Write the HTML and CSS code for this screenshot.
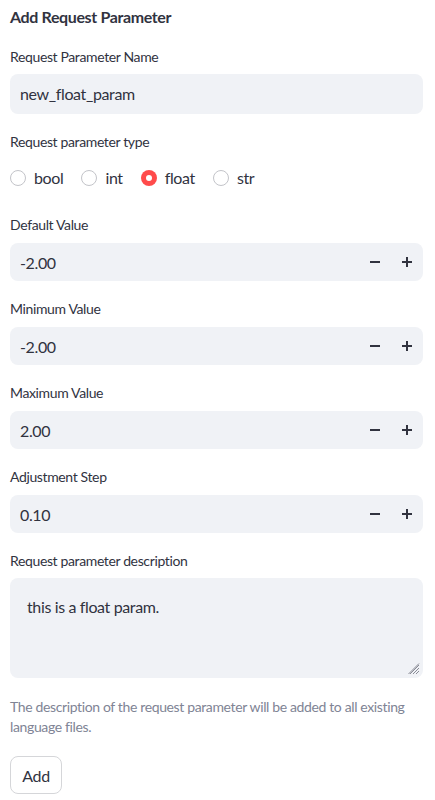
FILE: index.html
```html
<!DOCTYPE html>
<html lang="en">
<head>
<meta charset="utf-8">
<title>Add Request Parameter</title>
<link rel="stylesheet" href="styles.css">
</head>
<body>
<main class="form">
  <h3 class="title">Add Request Parameter</h3>

  <div class="field">
    <label class="label">Request Parameter Name</label>
    <div class="text-input">new_float_param</div>
  </div>

  <div class="field">
    <label class="label">Request parameter type</label>
    <div class="radios">
      <span class="radio"><span class="dot"></span>bool</span>
      <span class="radio"><span class="dot"></span>int</span>
      <span class="radio"><span class="dot on"></span>float</span>
      <span class="radio"><span class="dot"></span>str</span>
    </div>
  </div>

  <div class="field after-radios">
    <label class="label">Default Value</label>
    <div class="num-input">
      <span class="num-value">-2.00</span>
      <span class="step"><svg width="10" height="10" viewBox="0 0 10 10"><rect x="0" y="4" width="10" height="2" fill="#31333F"/></svg></span>
      <span class="step"><svg width="10" height="10" viewBox="0 0 10 10"><rect x="0" y="4" width="10" height="2" fill="#31333F"/><rect x="4" y="0" width="2" height="10" fill="#31333F"/></svg></span>
    </div>
  </div>

  <div class="field">
    <label class="label">Minimum Value</label>
    <div class="num-input">
      <span class="num-value">-2.00</span>
      <span class="step"><svg width="10" height="10" viewBox="0 0 10 10"><rect x="0" y="4" width="10" height="2" fill="#31333F"/></svg></span>
      <span class="step"><svg width="10" height="10" viewBox="0 0 10 10"><rect x="0" y="4" width="10" height="2" fill="#31333F"/><rect x="4" y="0" width="2" height="10" fill="#31333F"/></svg></span>
    </div>
  </div>

  <div class="field">
    <label class="label">Maximum Value</label>
    <div class="num-input">
      <span class="num-value">2.00</span>
      <span class="step"><svg width="10" height="10" viewBox="0 0 10 10"><rect x="0" y="4" width="10" height="2" fill="#31333F"/></svg></span>
      <span class="step"><svg width="10" height="10" viewBox="0 0 10 10"><rect x="0" y="4" width="10" height="2" fill="#31333F"/><rect x="4" y="0" width="2" height="10" fill="#31333F"/></svg></span>
    </div>
  </div>

  <div class="field">
    <label class="label">Adjustment Step</label>
    <div class="num-input">
      <span class="num-value">0.10</span>
      <span class="step"><svg width="10" height="10" viewBox="0 0 10 10"><rect x="0" y="4" width="10" height="2" fill="#31333F"/></svg></span>
      <span class="step"><svg width="10" height="10" viewBox="0 0 10 10"><rect x="0" y="4" width="10" height="2" fill="#31333F"/><rect x="4" y="0" width="2" height="10" fill="#31333F"/></svg></span>
    </div>
  </div>

  <div class="field">
    <label class="label">Request parameter description</label>
    <div class="textarea">this is a float param.
      <svg class="grip" width="12" height="12" viewBox="0 0 12 12"><path d="M11 2L2 11M11 5L5 11M11 8L8 11M11 0.5L0.5 11" stroke="#8a8c96" stroke-width="1" fill="none"/></svg>
    </div>
  </div>

  <p class="help">The description of the request parameter will be added to all existing language files.</p>

  <button class="btn" type="button">Add</button>
</main>
</body>
</html>
```

FILE: styles.css
```css
* { box-sizing: border-box; }
html, body { margin: 0; padding: 0; background: #ffffff; }
body {
  font-family: "Lato", "Source Sans Pro", sans-serif;
  color: #31333F;
  letter-spacing: -0.023em;
}
.form {
  width: 413px;
  margin-left: 10px;
  padding-top: 5px;
  display: flex;
  flex-direction: column;
}
.title {
  margin: 0;
  font-size: 16px;
  line-height: 24px;
  font-weight: 700;
}
.field {
  display: flex;
  flex-direction: column;
  margin-top: 16px;
}
.field.after-radios { margin-top: 23px; }
.label {
  font-size: 14px;
  line-height: 24px;
  height: 24px;
}
.text-input {
  margin-top: 5px;
  height: 40px;
  background: #F0F2F6;
  border-radius: 8px;
  padding: 0 10px;
  font-size: 16px;
  line-height: 40px;
}
.radios {
  margin-top: 12px;
  display: flex;
  align-items: center;
  height: 24px;
  gap: 18px;
}
.radio {
  display: flex;
  align-items: center;
  gap: 8px;
  font-size: 16px;
  line-height: 24px;
}
.dot {
  width: 16px;
  height: 16px;
  border-radius: 50%;
  border: 1px solid #C3C4C9;
  background: #fff;
  display: flex;
  align-items: center;
  justify-content: center;
}
.dot.on {
  border: none;
  background: #FF4B4B;
}
.dot.on::after {
  content: "";
  width: 6px;
  height: 6px;
  border-radius: 50%;
  background: #fff;
}
.num-input {
  margin-top: 6px;
  height: 38px;
  background: #F0F2F6;
  border-radius: 8px;
  display: flex;
  align-items: center;
  padding-left: 10px;
  font-size: 16px;
}
.num-value { flex: 1; }
.step {
  width: 32px;
  height: 38px;
  display: flex;
  align-items: center;
  justify-content: center;
}
.textarea {
  position: relative;
  margin-top: 5px;
  height: 100px;
  background: #F0F2F6;
  border-radius: 8px;
  padding: 17px 17px;
  font-size: 16px;
  line-height: 24px;
}
.grip {
  position: absolute;
  right: 3px;
  bottom: 3px;
}
.help {
  margin: 19px 0 0;
  font-size: 14px;
  line-height: 20px;
  color: #808495;
}
.btn {
  margin-top: 19px;
  align-self: flex-start;
  width: 52px;
  height: 38px;
  background: #fff;
  border: 1px solid #D5D6D9;
  border-radius: 8px;
  font-family: inherit;
  font-size: 16px;
  letter-spacing: inherit;
  color: #31333F;
  padding: 0;
}
```
